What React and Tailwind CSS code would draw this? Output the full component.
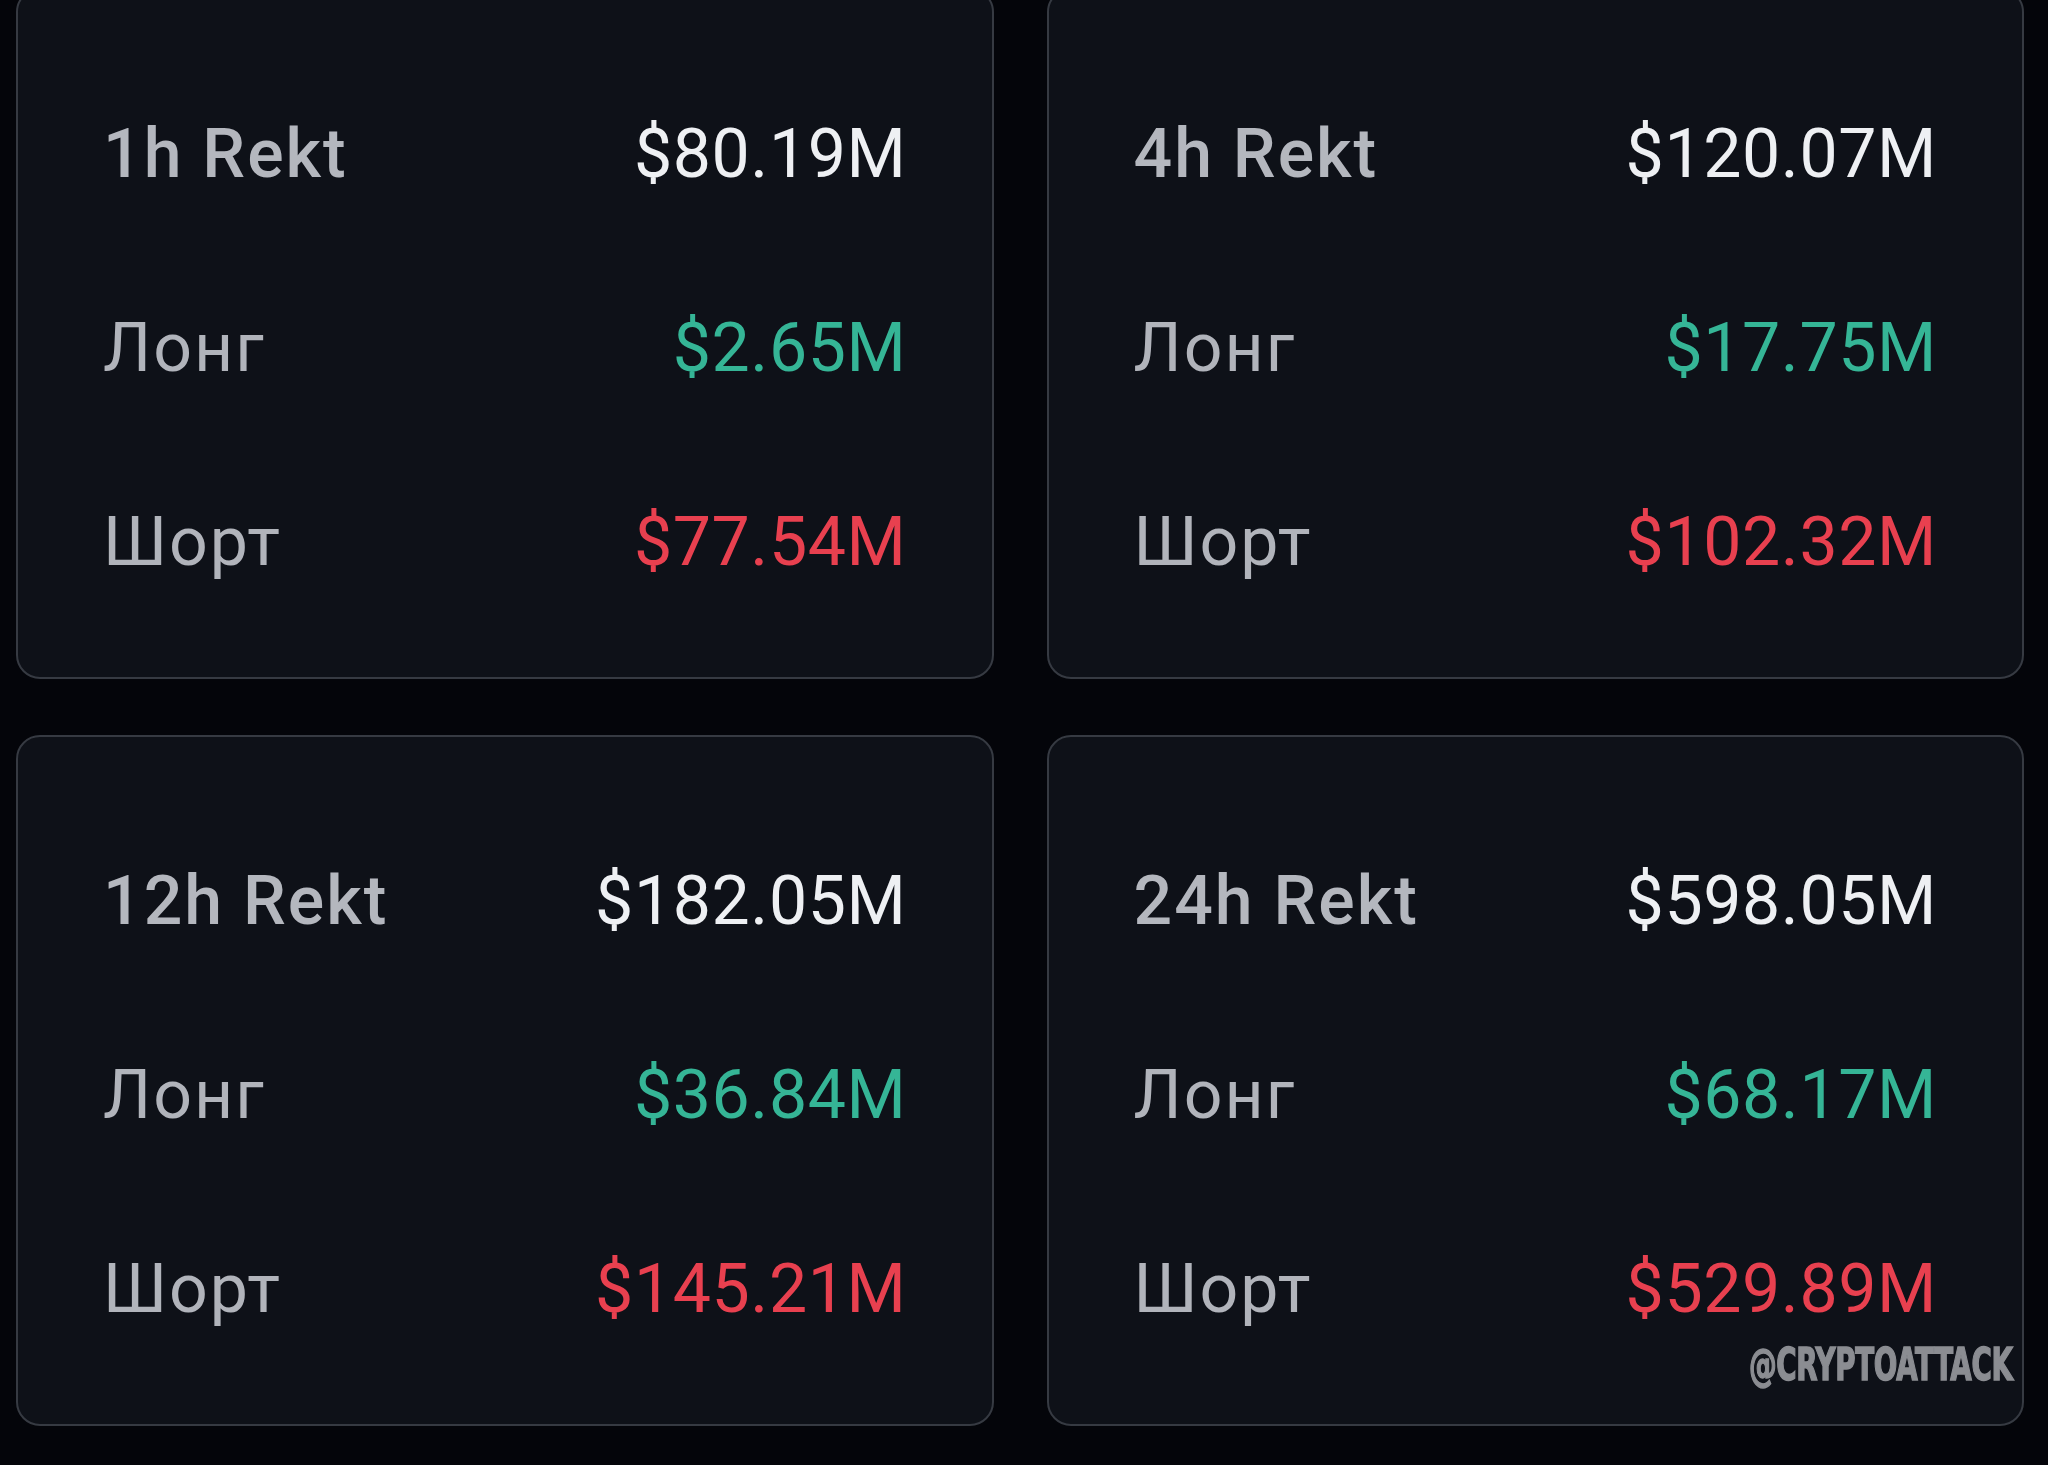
import React from 'react';

const cards = [
  { label: '1h Rekt', total: '$80.19M', long: '$2.65M', short: '$77.54M' },
  { label: '4h Rekt', total: '$120.07M', long: '$17.75M', short: '$102.32M' },
  { label: '12h Rekt', total: '$182.05M', long: '$36.84M', short: '$145.21M' },
  { label: '24h Rekt', total: '$598.05M', long: '$68.17M', short: '$529.89M', mark: true },
];

function Row({ label, value, labelClass, valueClass }) {
  return (
    <div className="h-[194px] flex items-center justify-between">
      <span className={`leading-none tracking-[2px] ${labelClass}`}>{label}</span>
      <span className={`leading-none tracking-[0.6px] ${valueClass}`}>{value}</span>
    </div>
  );
}

function RektCard({ card }) {
  return (
    <div className="relative h-[691px] rounded-[24px] border-2 border-[#363a42] bg-[#0e1118] pl-[85px] pr-[85px] pt-[67px]">
      <Row label={card.label} value={card.total} labelClass="font-medium text-[#b4b7be]" valueClass="text-[#eef0f3]" />
      <Row label="Лонг" value={card.long} labelClass="text-[#b1b4bb]" valueClass="text-[#35b596]" />
      <Row label="Шорт" value={card.short} labelClass="text-[#b1b4bb]" valueClass="text-[#e8404f]" />
      {card.mark && (
        <div className="absolute right-[9px] top-[606px] origin-right scale-x-[0.7] text-[44px] font-bold leading-none tracking-[-0.5px] text-[#8b8d92] blur-[0.6px] [-webkit-text-stroke:1.5px_#8b8d92] [font-family:'DejaVu_Sans_Condensed','DejaVu_Sans',sans-serif] [font-stretch:condensed]">
          @CRYPTOATTACK
        </div>
      )}
    </div>
  );
}

export default function App() {
  return (
    <div className="relative w-[2048px] h-[1465px] overflow-hidden bg-[#04050a] text-[68px] [font-family:Roboto,'Liberation_Sans',sans-serif]">
      <div className="-mt-[12px] pl-[16px] pr-[24px] grid grid-cols-2 gap-x-[53px] gap-y-[56px]">
        {cards.map((c) => (
          <RektCard key={c.label} card={c} />
        ))}
      </div>
    </div>
  );
}
